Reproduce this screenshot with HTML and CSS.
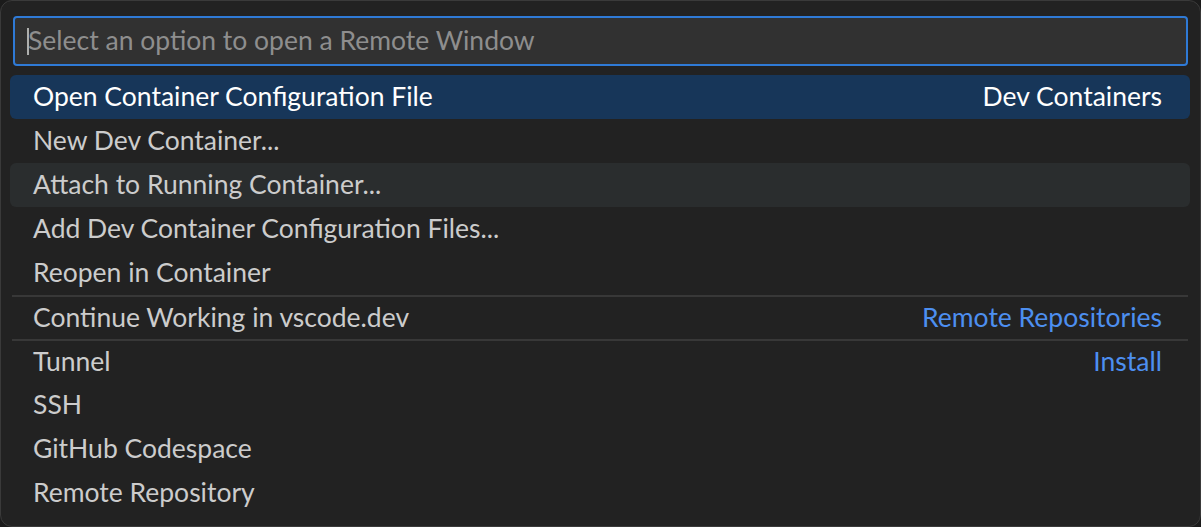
FILE: index.html
```html
<!DOCTYPE html>
<html lang="en">
<head>
<meta charset="utf-8">
<title>Remote Window</title>
<link rel="stylesheet" href="styles.css">
</head>
<body>
<div class="widget">
  <div class="input">
    <span class="caret"></span>
    <span class="placeholder">Select an option to open a Remote Window</span>
  </div>
  <ul class="list">
    <li class="row selected"><span class="label">Open Container Configuration File</span><span class="desc">Dev Containers</span></li>
    <li class="row"><span class="label">New Dev Container...</span></li>
    <li class="row hover"><span class="label">Attach to Running Container...</span></li>
    <li class="row"><span class="label">Add Dev Container Configuration Files...</span></li>
    <li class="row"><span class="label">Reopen in Container</span></li>
    <li class="row sep"><span class="label">Continue Working in vscode.dev</span><span class="desc link">Remote Repositories</span></li>
    <li class="row sep"><span class="label">Tunnel</span><span class="desc link">Install</span></li>
    <li class="row"><span class="label">SSH</span></li>
    <li class="row"><span class="label">GitHub Codespace</span></li>
    <li class="row"><span class="label">Remote Repository</span></li>
  </ul>
</div>
</body>
</html>
```
FILE: styles.css
```css
html, body {
  margin: 0;
  padding: 0;
  background: #1b1b1b;
}
body {
  width: 1201px;
  height: 527px;
  font-family: Lato, "Open Sans", sans-serif;
}
.widget {
  box-sizing: border-box;
  width: 1201px;
  height: 527px;
  background: #222222;
  border: 1px solid #3a3a3a;
  border-radius: 12px;
  padding: 15px 10px 0 9px;
}
.input {
  box-sizing: border-box;
  position: relative;
  height: 50px;
  margin: 0 2px 0 3px;
  background: #313131;
  border: 2px solid #2f7ad6;
  border-radius: 4px;
  display: flex;
  align-items: center;
  padding: 0 0 3px 13px;
}
.caret {
  position: absolute;
  left: 12px;
  top: 10px;
  width: 2px;
  height: 27px;
  background: #aeafad;
}
.placeholder {
  color: #8e8e8e;
  font-size: 26.5px;
  line-height: 30px;
}
.list {
  list-style: none;
  margin: 9px 0 0 0;
  padding: 0;
}
.row {
  position: relative;
  box-sizing: border-box;
  height: 44px;
  display: flex;
  align-items: center;
  justify-content: space-between;
  padding: 0 28px 3px 23px;
  border-radius: 6px;
  color: #cccccc;
  font-size: 26.5px;
  line-height: 30px;
}
.row.selected {
  background: #173659;
  color: #ffffff;
}
.row.hover {
  background: #2a2d2e;
}
.row.sep {
  padding-top: 2px;
}
.row.sep::before {
  content: "";
  position: absolute;
  left: 2px;
  right: 2px;
  top: 0;
  height: 2px;
  background: #383838;
}
.desc.link {
  color: #4d8ff0;
}
```
